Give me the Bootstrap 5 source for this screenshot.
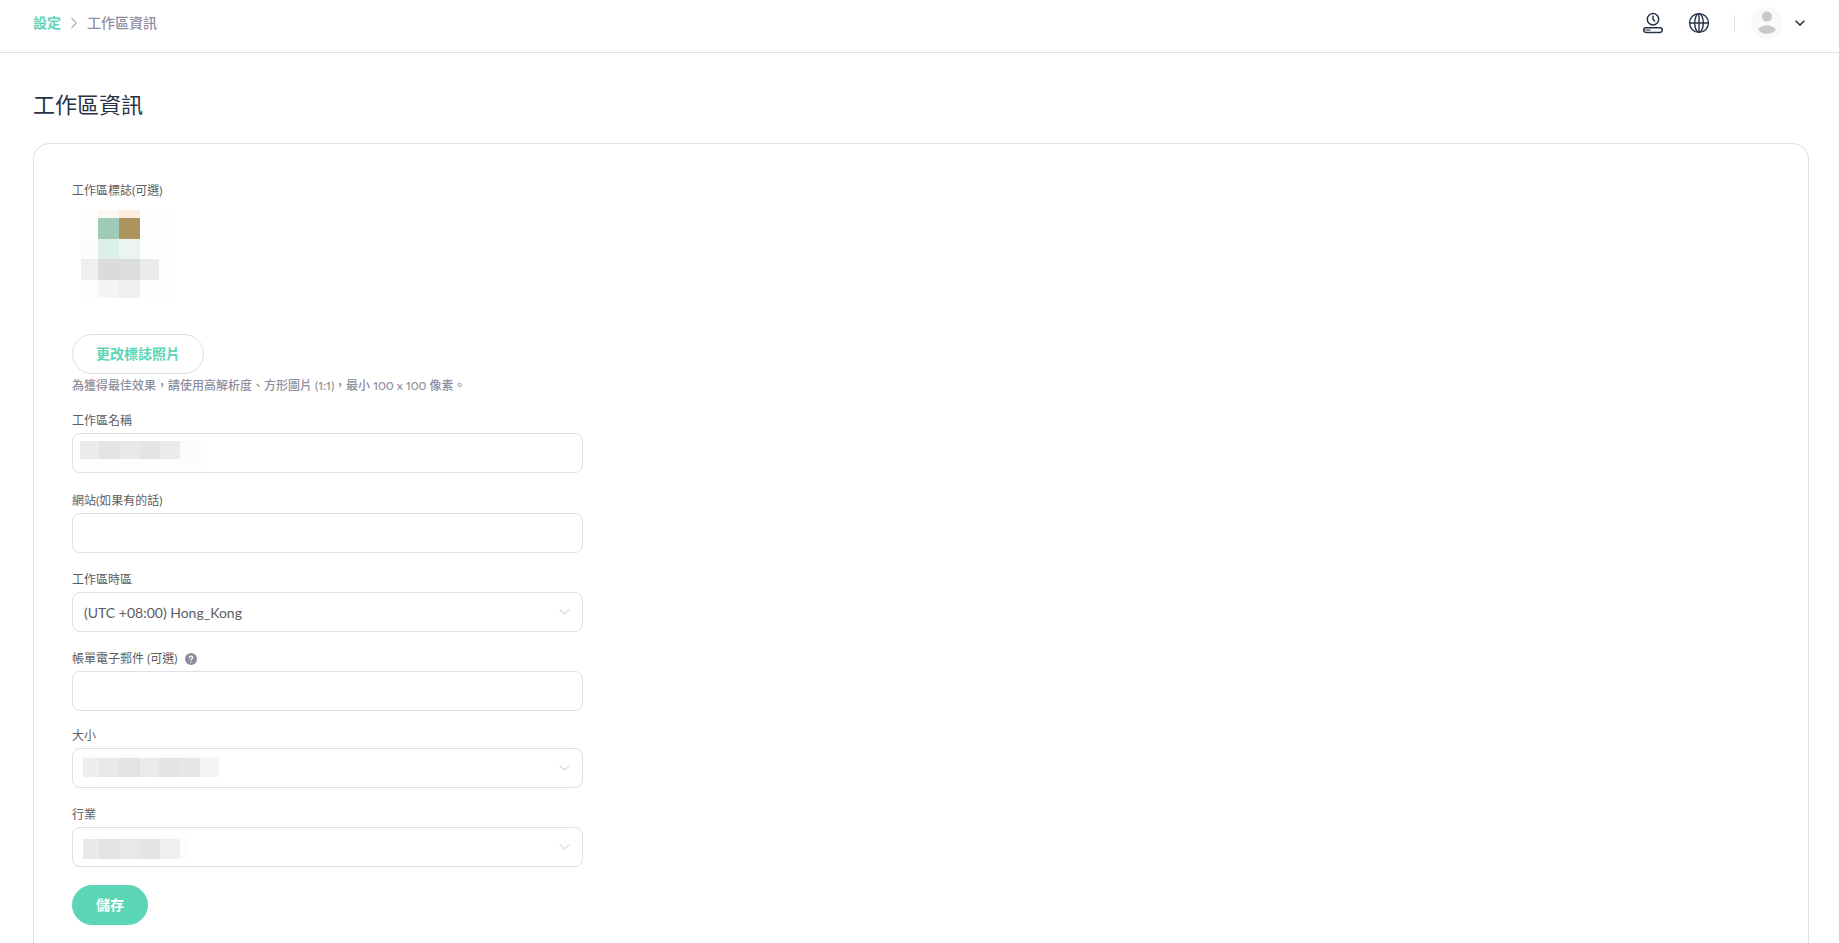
<!DOCTYPE html>
<html lang="zh-Hant">
<head>
<meta charset="utf-8">
<meta name="viewport" content="width=device-width, initial-scale=1">
<title>工作區資訊</title>
<link href="https://cdn.jsdelivr.net/npm/bootstrap@5.3.0/dist/css/bootstrap.min.css" rel="stylesheet">
<style>
  :root { --line: #d8e0ea; --brand: #5cd5b7; --ink: #263345; --muted: #8e8e9f; --body: #5d5d5d; }
  body { font-family: Lato, "Noto Sans CJK TC", sans-serif; font-variant-numeric: proportional-nums; color: var(--body); font-size: 14px; background: #fff; }
  .topbar { padding: 7px 34px 13px 33px; border-bottom: 1px solid var(--line); color: var(--ink); }
  .crumbs { font-size: 14px; line-height: 20px; gap: 10px; color: var(--muted); font-weight: 500; }
  .crumbs a { color: var(--brand); font-weight: 700; }
  .tools { gap: 24px; }
  .icon-btn { color: var(--ink); line-height: 0; }
  .divider { width: 1px; height: 16px; background: var(--line); }
  .page { padding: 36px 30px 0 33px; }
  .page-title { font-size: 22px; line-height: 32px; font-weight: 400; color: var(--ink); margin-bottom: 22px; }
  .panel { border: 1px solid var(--line); border-radius: 16px; padding: 35px 38px 40px; }
  .form-col { max-width: 511px; }
  .field-label { display: block; font-size: 12px; line-height: 24px; }
  .logo-preview { display: block; margin: 7px 0 36px 9px; }
  .field { margin-bottom: 15px; }
  .field-first { margin-bottom: 16px; }
  .field-tight { margin-bottom: 13px; }
  .control { height: 40px; border: 1px solid var(--line); border-radius: 8px; font-size: 14px; color: var(--body); padding: 0 11px; }
  select.control { background-image: none; }
  .arrow { position: absolute; right: 13px; top: 17px; pointer-events: none; }
  .veil { position: absolute; left: 8px; top: 8px; pointer-events: none; }
  .veil-select { left: 11px; top: 7px; }
  .pill { height: 40px; border-radius: 20px; padding: 0 23px; font-size: 14px; line-height: 20px; font-weight: 700; }
  .pill-outline, .pill-outline:hover { border: 1px solid var(--line); color: var(--brand); background: #fff; }
  .pill-solid, .pill-solid:hover { border: 1px solid var(--brand); color: #fff; background: var(--brand); }
  .save-row { padding-top: 3px; }
  .hint { font-size: 12px; line-height: 24px; color: var(--muted); margin-bottom: 11px; font-weight: 500; }
</style>
</head>
<body>
<header class="topbar d-flex align-items-center justify-content-between">
  <nav class="crumbs d-flex align-items-center" aria-label="breadcrumb">
    <a href="#" class="text-decoration-none">設定</a>
    <svg width="6" height="12" viewBox="0 0 6 12" fill="none" stroke="#b4b4c0" stroke-width="1.2"><path d="M.5 1 5.3 6 .5 11"/></svg>
    <span>工作區資訊</span>
  </nav>
  <div class="tools d-flex align-items-center">
    <button class="icon-btn btn p-0 border-0" type="button" aria-label="用量">
      <svg width="22" height="22" viewBox="0 0 22 22" fill="none" stroke="currentColor" stroke-width="1.5" stroke-linecap="round"><circle cx="11" cy="7.2" r="5.7"/><path d="M11 4.2v3l1.600 1.800"/><rect x="1.700" y="15.800" width="18.600" height="4.600" rx="2.300"/><path d="M4 18.100h4" stroke-width="1.600" stroke="#7a8492"/></svg>
    </button>
    <button class="icon-btn btn p-0 border-0" type="button" aria-label="語言">
      <svg width="22" height="22" viewBox="0 0 22 22" fill="none" stroke="currentColor" stroke-width="1.4"><circle cx="11" cy="11" r="9.4"/><ellipse cx="11" cy="11" rx="4.3" ry="9.4"/><path d="M1.6 11h18.8M11 1.6v18.8"/></svg>
    </button>
    <div class="d-flex align-items-center gap-3">
      <span class="divider"></span>
      <button class="icon-btn btn p-0 border-0 d-flex align-items-center gap-2" type="button" aria-label="帳戶">
        <svg width="32" height="32" viewBox="0 0 32 32"><circle cx="16" cy="16" r="16" fill="#f8f9fb"/><circle cx="16" cy="9.6" r="5" fill="#c8c9cb"/><path d="M7 22.8C10.5 16.700 21.500 16.700 25 22.800 21.500 28.300 10.500 28.300 7 22.800z" fill="#c8c9cb"/></svg>
        <svg class="ms-1" width="10" height="6" viewBox="0 0 10 6" fill="none" stroke="currentColor" stroke-width="1.6"><path d="M.6.7 5 5 9.400.7"/></svg>
      </button>
    </div>
  </div>
</header>

<main class="page">
  <h1 class="page-title">工作區資訊</h1>
  <section class="panel">
    <form class="form-col">
      <span class="field-label">工作區標誌(可選)</span>
      <svg class="logo-preview" width="94" height="88" viewBox="0 0 94 88" shape-rendering="crispEdges">
        <rect width="94" height="88" fill="#fefefe"/>
        <path d="M17 0h21v8H17z" fill="#fdf8f4"/><path d="M38 0h21v8H38z" fill="#faeddf"/>
        <path d="M17 8h21v21H17z" fill="#a0cab8"/><path d="M38 8h21v21H38z" fill="#ad935d"/>
        <path d="M0 29h17v20H0z" fill="#fcfcfc"/><path d="M17 29h21v20H17z" fill="#dbf0e7"/><path d="M38 29h21v20H38z" fill="#ebf4ef"/>
        <path d="M0 49h17v21H0z" fill="#efefef"/><path d="M17 49h21v21H17z" fill="#dadbdd"/><path d="M38 49h21v21H38z" fill="#dcdddf"/><path d="M59 49h19v21H59z" fill="#e9eaec"/>
        <path d="M17 70h21v18H17z" fill="#f5f5f5"/><path d="M38 70h21v18H38z" fill="#f0f0f0"/>
      </svg>
      <button class="pill pill-outline btn" type="button">更改標誌照片</button>
      <p class="hint">為獲得最佳效果，請使用高解析度、方形圖片 (1:1)，最小 100 x 100 像素。</p>

      <div class="field field-first">
        <label class="field-label" for="wsName">工作區名稱</label>
        <div class="position-relative">
          <input class="control form-control shadow-none" id="wsName" type="text">
          <svg class="veil" width="127" height="25" viewBox="0 0 127 25" shape-rendering="crispEdges">
            <path d="M0 0h127v25H0z" fill="#fdfdfd"/><path d="M100 0h20v18h-20z" fill="#fbfbfb"/><path d="M0 0h19v18H0z" fill="#ebebeb"/><path d="M19 0h21v18H19z" fill="#e4e4e4"/><path d="M40 0h20v18H40z" fill="#e9e9e9"/><path d="M60 0h20v18H60z" fill="#e4e4e4"/><path d="M80 0h20v18H80z" fill="#ebebeb"/>
          </svg>
        </div>
      </div>
      <div class="field">
        <label class="field-label" for="wsSite">網站(如果有的話)</label>
        <input class="control form-control shadow-none" id="wsSite" type="text">
      </div>
      <div class="field">
        <label class="field-label" for="wsZone">工作區時區</label>
        <div class="position-relative">
          <select class="control form-select shadow-none" id="wsZone"><option>(UTC +08:00) Hong_Kong</option></select>
          <svg class="arrow" width="11" height="6" viewBox="0 0 11 6" fill="none" stroke="#d8dfeb" stroke-width="1.400"><path d="M.5.5 5.500 5 10.500.5"/></svg>
        </div>
      </div>
      <div class="field field-tight">
        <div class="d-flex align-items-center gap-2">
          <label class="field-label" for="wsMail">帳單電子郵件 (可選)</label>
          <svg width="12" height="12" viewBox="0 0 12 12" fill="none" stroke="#fff" stroke-width="1.200" stroke-linecap="round"><circle cx="6" cy="6" r="6" fill="#8e8e9f" stroke="none"/><path d="M4.400 4.600C4.500 2.700 7.700 2.700 7.700 4.600 7.700 5.700 6 5.700 6 7"/><path d="M6 9v.1"/></svg>
        </div>
        <input class="control form-control shadow-none" id="wsMail" type="email">
      </div>
      <div class="field">
        <label class="field-label" for="wsSize">大小</label>
        <div class="position-relative">
          <select class="control form-select shadow-none" id="wsSize"><option></option></select>
          <svg class="veil veil-select" width="140" height="22" viewBox="0 0 140 22" shape-rendering="crispEdges">
            <path d="M0 0h140v3H0z" fill="#fcfcfc"/><path d="M0 3h16v19H0z" fill="#eee"/><path d="M16 3h20v19H16z" fill="#e8e8e8"/><path d="M36 3h21v19H36z" fill="#e3e3e3"/><path d="M57 3h19v19H57z" fill="#ebebeb"/><path d="M76 3h21v19H76z" fill="#e4e4e4"/><path d="M97 3h20v19H97z" fill="#e6e6e6"/><path d="M117 3h19v19h-19z" fill="#f3f3f3"/>
          </svg>
          <svg class="arrow" width="11" height="6" viewBox="0 0 11 6" fill="none" stroke="#d8dfeb" stroke-width="1.400"><path d="M.5.5 5.500 5 10.500.5"/></svg>
        </div>
      </div>
      <div class="field">
        <label class="field-label" for="wsTrade">行業</label>
        <div class="position-relative">
          <select class="control form-select shadow-none" id="wsTrade"><option></option></select>
          <svg class="veil veil-select" width="105" height="25" viewBox="0 0 105 25" shape-rendering="crispEdges">
            <path d="M0 2h105v22H0z" fill="#fcfcfc"/><path d="M0 5h16v20H0z" fill="#e9e9e9"/><path d="M16 5h21v20H16z" fill="#e3e3e3"/><path d="M37 5h20v20H37z" fill="#e8e8e8"/><path d="M57 5h20v20H57z" fill="#e4e4e4"/><path d="M77 5h20v20H77z" fill="#efefef"/>
          </svg>
          <svg class="arrow" width="11" height="6" viewBox="0 0 11 6" fill="none" stroke="#d8dfeb" stroke-width="1.400"><path d="M.5.5 5.500 5 10.500.5"/></svg>
        </div>
      </div>
      <div class="save-row"><button class="pill pill-solid btn" type="submit">儲存</button></div>
    </form>
  </section>
</main>
<script src="https://cdn.jsdelivr.net/npm/bootstrap@5.3.0/dist/js/bootstrap.bundle.min.js"></script>
</body>
</html>
